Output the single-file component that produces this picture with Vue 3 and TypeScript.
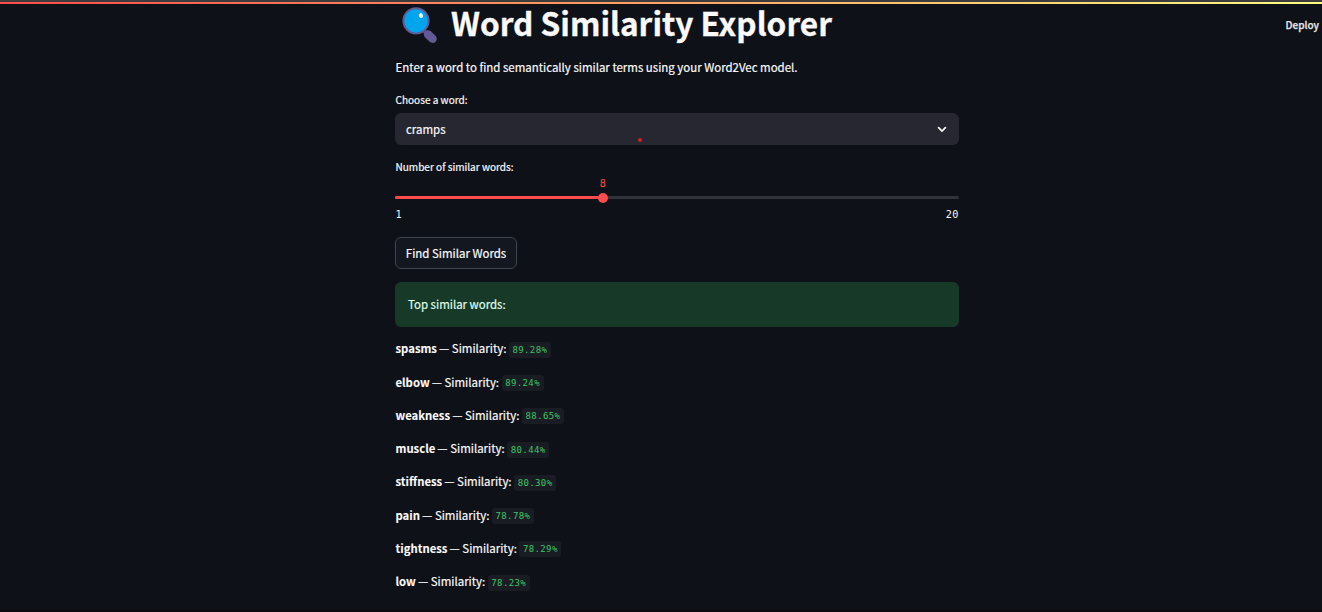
<script setup lang="ts">
import { computed, ref } from 'vue'

interface Match {
  word: string
  score: string
}

const selected = ref('cramps')
const min = 1
const max = 20
const count = ref(8)
const percent = computed(() => ((count.value - min) / (max - min)) * 100 + '%')

const matches: Match[] = [
  { word: 'spasms', score: '89.28%' },
  { word: 'elbow', score: '89.24%' },
  { word: 'weakness', score: '88.65%' },
  { word: 'muscle', score: '80.44%' },
  { word: 'stiffness', score: '80.30%' },
  { word: 'pain', score: '78.78%' },
  { word: 'tightness', score: '78.29%' },
  { word: 'low', score: '78.23%' },
]
</script>

<template>
  <div class="app">
    <div class="edge"></div>
    <div class="decoration"></div>
    <button class="deploy">Deploy</button>
    <main class="block">
      <h1 class="title">
        <svg class="glass" viewBox="0 0 36 36" width="36" height="36">
          <path d="M22.5 23.5 L26 27" stroke="#533566" stroke-width="4" />
          <path d="M27 27.4 L31.6 31.8" stroke="#635994" stroke-width="8.4" stroke-linecap="round" />
          <circle cx="15" cy="13.8" r="12.6" fill="#00a6ed" stroke="#635994" stroke-width="2" />
          <ellipse cx="20" cy="8.6" rx="2" ry="2.5" fill="#fff" transform="rotate(-28 20 8.6)" />
        </svg>
        <span class="title-text">Word Similarity Explorer</span>
      </h1>
      <p class="intro"><span>Enter a word to find semantically similar terms using your Word2Vec model.</span></p>
      <label class="label"><span>Choose a word:</span></label>
      <div class="select">
        <span>{{ selected }}</span>
        <svg width="10" height="7" viewBox="0 0 10 7">
          <path d="M1.6 1.6 L5 5 L8.4 1.6" fill="none" stroke="#fafafa" stroke-width="1.7" stroke-linecap="round" />
        </svg>
        <i class="speck"></i>
      </div>
      <label class="label second"><span>Number of similar words:</span></label>
      <div class="slider">
        <div class="fill" :style="{ width: percent }"></div>
        <div class="thumb" :style="{ left: percent }"><span class="value">{{ count }}</span></div>
      </div>
      <div class="ticks"><span>{{ min }}</span><span class="max">{{ max }}</span></div>
      <button class="find"><span>Find Similar Words</span></button>
      <div class="success"><span>Top similar words:</span></div>
      <p v-for="m in matches" :key="m.word" class="match">
        <strong>{{ m.word }}</strong><span class="mid">— Similarity:</span><code>{{ m.score }}</code>
      </p>
    </main>
  </div>
</template>

<style>
html,
body {
  background: #0e1117;
  overflow: hidden;
}
</style>

<style scoped>
.app {
  position: relative;
  box-sizing: border-box;
  width: 1322px;
  height: 612px;
  overflow: hidden;
  background: #0e1117;
  border-bottom: 2px solid #0a0c10;
  color: #fafafa;
  font-family: "Noto Sans CJK SC", "Noto Sans", sans-serif;
  font-size: 11.46px;
  -webkit-text-stroke: 0.2px currentColor;
}
.edge {
  height: 2px;
  background: #3c3c3e;
}
.decoration {
  height: 2px;
  background: linear-gradient(90deg, #ff4b4b, #fffd80);
}
.deploy {
  position: absolute;
  top: 16px;
  right: 3px;
  padding: 0;
  border: 0;
  background: none;
  color: #e6e6e7;
  font: 500 10px/18px "Noto Sans CJK SC", "Noto Sans", sans-serif;
  -webkit-text-stroke: 0.25px currentColor;
}
.block {
  display: flex;
  flex-direction: column;
  width: 564px;
  margin-left: 395px;
}
.title {
  display: flex;
  align-items: center;
  height: 42px;
  margin: 0;
  font-size: 31.6px;
  line-height: 42px;
  font-weight: 700;
  white-space: nowrap;
}
.glass {
  flex: none;
  margin: -1px 14px 0 6px;
}
.title-text {
  height: 48px;
  -webkit-text-stroke: 0.3px currentColor;
}
.intro {
  height: 20px;
  margin: 11px 0 1px;
  padding-left: 0.5px;
  line-height: 20px;
}
.label {
  height: 18px;
  margin-top: 13px;
  padding-left: 0.5px;
  font-size: 10.05px;
  line-height: 18px;
}
.select {
  position: relative;
  box-sizing: border-box;
  display: flex;
  align-items: center;
  justify-content: space-between;
  height: 32px;
  margin-top: 4px;
  padding: 0 12px 0 11px;
  border-radius: 6px;
  background: #262730;
}
.speck {
  position: absolute;
  left: 242.5px;
  top: 25px;
  width: 4px;
  height: 4px;
  border-radius: 50%;
  background: #d91f26;
}
.slider {
  position: relative;
  height: 3px;
  margin-top: 20px;
  border-radius: 2px;
  background: #31333c;
}
.fill {
  height: 3px;
  border-radius: 2px;
  background: #ff4b4b;
}
.thumb {
  position: absolute;
  top: -3.5px;
  width: 10px;
  height: 10px;
  margin-left: -5px;
  border-radius: 50%;
  background: #ff4b4b;
}
.value {
  position: absolute;
  left: 0;
  bottom: 12px;
  width: 10px;
  text-align: center;
  color: #ff4b4b;
  font: 10.2px/14px "DejaVu Sans Mono", monospace;
  -webkit-text-stroke: 0;
}
.ticks {
  display: flex;
  justify-content: space-between;
  height: 16px;
  margin-top: 8px;
  padding: 0 0 0 0.5px;
  font: 10.2px/16px "DejaVu Sans Mono", monospace;
  letter-spacing: 0.5px;
  -webkit-text-stroke: 0;
}
.find {
  align-self: flex-start;
  box-sizing: border-box;
  width: 122px;
  height: 32px;
  margin-top: 14px;
  padding: 0 0 1px;
  border: 1px solid #41444c;
  border-radius: 6px;
  background: #131720;
  color: #fafafa;
  font: 11.46px/28px "Noto Sans CJK SC", "Noto Sans", sans-serif;
  -webkit-text-stroke: 0.2px currentColor;
}
.success {
  height: 45px;
  margin: 13px 0 11.3px;
  padding-left: 13px;
  border-radius: 6px;
  background: #173928;
  color: #dffde9;
  line-height: 45px;
}
.match {
  display: flex;
  align-items: center;
  height: 20px;
  margin: 0 0 13.28px;
  padding-left: 0.5px;
  line-height: 20px;
}
.match strong {
  font-size: 11.3px;
  -webkit-text-stroke: 0.1px currentColor;
}
.mid {
  margin-left: 2.1px;
}
code {
  height: 16px;
  margin: 3px 0 0 2.5px;
  padding: 0 3.6px;
  border-radius: 3px;
  background: #1a1c24;
  color: #35c863;
  font: 9px/16px "DejaVu Sans Mono", monospace;
  letter-spacing: 0.38px;
  -webkit-text-stroke: 0;
}
</style>
